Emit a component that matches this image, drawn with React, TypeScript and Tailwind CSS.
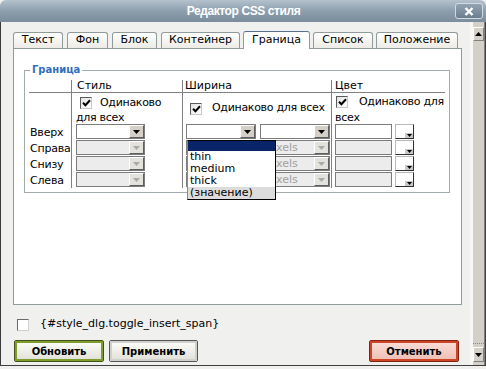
import React from "react";

function Arrow({ disabled }: { disabled?: boolean }) {
  return (
    <svg width="7" height="4" viewBox="0 0 7 4">
      <path d="M0 0h7L3.5 4z" fill={disabled ? "#a9a9a9" : "#000"} />
    </svg>
  );
}

function Check({ checked, className }: { checked?: boolean; className?: string }) {
  return (
    <div
      className={
        "w-[12px] h-[12px] shrink-0 border border-t-[#5a5a5a] border-l-[#5a5a5a] border-r-[#c8c8c8] border-b-[#c8c8c8] bg-gradient-to-br from-[#e2e2e2] to-white flex items-center justify-center " +
        (className || "")
      }
    >
      {checked ? (
        <svg width="9" height="8" viewBox="0 0 9 8">
          <path d="M1 3.8 L3.4 6.2 L8 1.2" stroke="#000" strokeWidth="2" fill="none" />
        </svg>
      ) : null}
    </div>
  );
}

function Select({
  className,
  disabled,
  text,
}: {
  className?: string;
  disabled?: boolean;
  text?: string;
}) {
  return (
    <div
      className={
        "h-[15px] shrink-0 flex border border-[#7c7c7c] " +
        (disabled ? "bg-[#ececec] " : "bg-white ") +
        (className || "")
      }
    >
      <div className="flex-1 overflow-hidden whitespace-nowrap pl-[5px] leading-[13px] text-[#a0a0a0]">{text}</div>
      <div
        className={
          "w-[15px] h-full flex items-center justify-center border border-t-white border-l-white border-r-[#5e5e5e] border-b-[#5e5e5e] " +
          (disabled ? "bg-[#e4e2dc]" : "bg-[#d4d0c8]")
        }
      >
        <Arrow disabled={disabled} />
      </div>
    </div>
  );
}

function ColorInput({ disabled }: { disabled?: boolean }) {
  return (
    <>
      <div
        className={
          "ml-[3px] w-[57px] h-[15px] border border-[#7c7c7c] " + (disabled ? "bg-[#ececec]" : "bg-white")
        }
      />
      <div className="ml-[3px] w-[19px] h-[15px] border border-t-[#b8b8b8] border-l-[#b8b8b8] border-r-[#303030] border-b-[#303030] bg-white flex items-end justify-end">
        <div className="w-[8px] h-[5px] bg-[#c8c8c8] flex items-center justify-center">
          <svg width="5" height="3" viewBox="0 0 5 3">
            <path d="M0 0h5L2.5 3z" fill="#000" />
          </svg>
        </div>
      </div>
    </>
  );
}

const tabs = [
  { t: "Текст", cls: "w-[50px]" },
  { t: "Фон", cls: "w-[41px] ml-[4px]" },
  { t: "Блок", cls: "w-[45px] ml-[4px]" },
  { t: "Контейнер", cls: "w-[79px] ml-[4px]" },
  { t: "Граница", cls: "w-[67px] ml-[3px]", active: true },
  { t: "Список", cls: "w-[60px] ml-[3px]" },
  { t: "Положение", cls: "w-[82px] ml-[3px]" },
];

const rows = ["Вверх", "Справа", "Снизу", "Слева"];

export default function App() {
  return (
    <div className="w-[486px] h-[369px] overflow-hidden bg-[#f0f0ee] font-['DejaVu_Sans',sans-serif] text-[11px] text-black flex flex-col">
      {/* Title bar */}
      <div className="h-[22px] shrink-0 flex items-center pl-[32px] pr-[3px] rounded-t-[6px] bg-gradient-to-b from-[#b4c2cd] via-[#8d9ead] to-[#7b8c9c]">
        <div className="flex-1 text-center text-white font-bold text-[12px] tracking-[-0.4px] font-['Liberation_Sans',Arial,sans-serif]">
          Редактор CSS стиля
        </div>
        <div className="w-[28px] h-[16px] rounded-[3px] border border-[#d3dbe2] bg-gradient-to-b from-[#93a3b2] to-[#6c7e8e] flex items-center justify-center">
          <svg width="10" height="9" viewBox="0 0 10 9">
            <path d="M1.5 1 L8.5 8 M8.5 1 L1.5 8" stroke="white" strokeWidth="2.4" />
          </svg>
        </div>
      </div>

      <div className="h-[343px] flex">
        {/* Main area */}
        <div className="w-[470px] flex flex-col border-l border-[#3b3b3b] pl-[12px] pr-[8px] pt-[9px]">
          {/* Tabs */}
          <div className="flex items-end h-[17px]">
            {tabs.map((tb) =>
              tb.active ? (
                <div
                  key={tb.t}
                  className={
                    "h-[18px] -mb-px relative z-10 border border-b-0 border-[#919b9c] border-t-[#56718b] rounded-t-[3px] bg-white flex items-center justify-center " +
                    tb.cls
                  }
                >
                  {tb.t}
                </div>
              ) : (
                <div
                  key={tb.t}
                  className={
                    "h-[16px] border border-b-0 border-[#919b9c] rounded-t-[3px] bg-gradient-to-b from-white to-[#ecebe6] flex items-center justify-center " +
                    tb.cls
                  }
                >
                  {tb.t}
                </div>
              )
            )}
          </div>

          {/* Panel */}
          <div className="h-[257px] border border-[#919b9c] bg-white px-[10px]">
            <fieldset className="mt-[15px] w-[426px] border border-[#a3abae] pl-[4px] pr-[4px] pb-[4px]">
              <legend className="ml-[1px] px-[2px] text-[10px] font-bold leading-[12px] text-[#2f6fbd]">
                Граница
              </legend>
              {/* header */}
              <div className="flex h-[12px] leading-[12px] mt-[4px]">
                <div className="w-[42px]" />
                <div className="w-[111px] border-l border-[#808080] pl-[5px]">Стиль</div>
                <div className="w-[149px] border-l border-[#808080] pl-[2px]">Ширина</div>
                <div className="w-[114px] border-l border-[#808080] pl-[3px]">Цвет</div>
              </div>
              <div className="h-px bg-[#808080]" />
              {/* same-for-all row */}
              <div className="flex h-[31px] tracking-[-0.3px]">
                <div className="w-[42px]" />
                <div className="w-[111px] border-l border-[#808080] pl-[4px] pt-[4px]">
                  <div className="flex items-center h-[12px] whitespace-nowrap">
                    <Check checked className="ml-[4px]" />
                    <span className="ml-[8px]">Одинаково</span>
                  </div>
                  <div className="leading-[13px] mt-[2px]">для всех</div>
                </div>
                <div className="w-[149px] border-l border-[#808080] pl-[7px] flex items-center whitespace-nowrap">
                  <Check checked />
                  <span className="ml-[10px]">Одинаково для всех</span>
                </div>
                <div className="w-[114px] border-l border-[#808080] pl-[3px] pt-[3px]">
                  <div className="flex items-center h-[12px] whitespace-nowrap">
                    <Check checked className="ml-[1px]" />
                    <span className="ml-[11px]">Одинаково для</span>
                  </div>
                  <div className="leading-[13px] mt-[3px]">всех</div>
                </div>
              </div>
              {/* data rows */}
              {rows.map((r, i) => (
                <div key={r} className="flex h-[16px]">
                  <div className="w-[42px] pl-[1px] pt-[1px] leading-[16px] whitespace-nowrap tracking-[-0.2px]">{r}</div>
                  <div className="w-[111px] border-l border-[#808080] flex">
                    <Select className="ml-[4px] w-[69px]" disabled={i > 0} />
                  </div>
                  <div className="w-[149px] border-l border-[#808080] flex">
                    {i === 0 ? (
                      <div className="relative ml-[3px] w-[70px] h-[15px] flex">
                        <Select className="w-[70px]" />
                        <div className="absolute left-[1px] top-[16px] z-20 w-[89px] border border-black border-l-[#8a8a8a] bg-white flex flex-col">
                          <div className="h-[10px] bg-[#0a246a]" />
                          <div className="h-[12px] leading-[12px] pl-[2px]">thin</div>
                          <div className="h-[12px] leading-[12px] pl-[2px]">medium</div>
                          <div className="h-[12px] leading-[12px] pl-[2px]">thick</div>
                          <div className="h-[12px] leading-[12px] pl-[2px] bg-[#dcdcdc]">(значение)</div>
                        </div>
                      </div>
                    ) : (
                      <Select className="ml-[3px] w-[70px]" disabled />
                    )}
                    <Select className="ml-[4px] w-[70px]" disabled={i > 0} text={i > 0 ? "pixels" : ""} />
                  </div>
                  <div className="w-[114px] border-l border-[#808080] flex">
                    <ColorInput disabled={i > 0} />
                  </div>
                </div>
              ))}
            </fieldset>
          </div>

          {/* insert span toggle */}
          <div className="flex items-center mt-[13px] h-[13px]">
            <div className="ml-[4px] w-[12px] h-[12px] border border-t-[#6a6a6a] border-l-[#6a6a6a] border-r-[#d0d0d0] border-b-[#d0d0d0] bg-white" />
            <span className="ml-[11px]">{"{#style_dlg.toggle_insert_span}"}</span>
          </div>

          {/* buttons */}
          <div className="flex mt-[9px] h-[22px] text-[10px] font-bold">
            <div className="ml-[1px] w-[90px] h-[22px] border border-[#45521c] rounded-[2px]">
              <div className="h-full border-2 border-[#7f9d2c] bg-gradient-to-b from-[#fbfbf7] to-[#e3e2da] flex items-center justify-center">
                Обновить
              </div>
            </div>
            <div className="ml-[5px] w-[89px] h-[22px] border border-[#555555] rounded-[2px]">
              <div className="h-full border-2 border-[#d0d0cc] bg-gradient-to-b from-[#fbfbf7] to-[#e3e2da] flex items-center justify-center">
                Применить
              </div>
            </div>
            <div className="ml-auto mr-[3px] w-[90px] h-[22px] border border-[#7e2410] rounded-[2px]">
              <div className="h-full border-2 border-[#cf4424] bg-gradient-to-b from-[#f8dcd6] to-[#efc0b6] flex items-center justify-center">
                Отменить
              </div>
            </div>
          </div>
        </div>

        {/* Scrollbar */}
        <div className="w-[16px] flex">
          <div className="w-[3px] bg-[#f7f7f5]" />
          <div className="w-[11px] bg-[#d4d0c8] flex flex-col pt-[5px] pb-[3px]">
            <div className="h-[14px] border border-t-white border-l-white border-r-[#808080] border-b-[#808080] bg-[#d4d0c8] flex items-center justify-center">
              <svg width="7" height="4" viewBox="0 0 7 4">
                <path d="M0 4h7L3.5 0z" fill="#000" />
              </svg>
            </div>
            <div className="flex-1" />
            <div className="h-[2px] border-t border-dotted border-[#8a8a8a] mb-[2px]" />
            <div className="h-[15px] border border-t-white border-l-white border-r-[#808080] border-b-[#808080] bg-[#d4d0c8] flex items-center justify-center">
              <Arrow />
            </div>
          </div>
          <div className="w-[1px] bg-[#808080]" />
          <div className="w-[1px] bg-[#404040]" />
        </div>
      </div>
      <div className="h-[1px] bg-[#404040]" />
      <div className="h-[3px]" />
    </div>
  );
}
